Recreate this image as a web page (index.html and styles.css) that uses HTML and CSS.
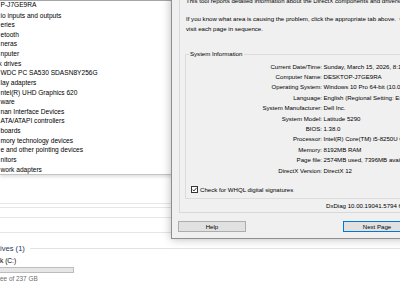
FILE: index.html
```html
<!DOCTYPE html>
<html lang="en">
<head>
  <meta charset="UTF-8" />
  <title>DirectX Diagnostic Tool</title>
<link rel="stylesheet" href="styles.css">
</head>
<body>
<div class="desk">
  <div class="devmgr">
    <ul class="tree">
      <li class="root">P-J7GE9RA</li>
      <li>io inputs and outputs</li>
      <li>eries</li>
      <li>etooth</li>
      <li>neras</li>
      <li>nputer</li>
      <li class="cut">k drives</li>
      <li>WDC PC SA530 SDASN8Y256G</li>
      <li>lay adapters</li>
      <li>ntel(R) UHD Graphics 620</li>
      <li>ware</li>
      <li>nan Interface Devices</li>
      <li>ATA/ATAPI controllers</li>
      <li>boards</li>
      <li>mory technology devices</li>
      <li>e and other pointing devices</li>
      <li>nitors</li>
      <li>work adapters</li>
    </ul>
  </div>

  <div class="explorer">
    <div class="strip s1"></div>
    <div class="strip s2"></div>
    <div class="strip s3"></div>
    <div class="strip s4"></div>
    <div class="group-head">
      <span>ives (1)</span>
      <div class="head-line"></div>
    </div>
    <div class="drive-name">k (C:)</div>
    <div class="drive-bar"></div>
    <div class="drive-free">ee of 237 GB</div>
  </div>
</div>

<div class="dialog">
  <div class="page">
    <p class="intro">This tool reports detailed information about the DirectX components and drivers installed on your system.</p>
    <p class="intro second">If you know what area is causing the problem, click the appropriate tab above.&nbsp; Otherwise, click the "Next Page" button below to<br>visit each page in sequence.</p>

    <div class="group">
      <span class="legend">System Information</span>
      <div class="info">
        <span class="key">Current Date/Time:</span><span>Sunday, March 15, 2026, 8:13:42 PM</span>
        <span class="key">Computer Name:</span><span>DESKTOP-J7GE9RA</span>
        <span class="key">Operating System:</span><span>Windows 10 Pro 64-bit (10.0, Build 19045)</span>
        <span class="key">Language:</span><span>English (Regional Setting: English)</span>
        <span class="key">System Manufacturer:</span><span>Dell Inc.</span>
        <span class="key">System Model:</span><span>Latitude 5290</span>
        <span class="key">BIOS:</span><span>1.38.0</span>
        <span class="key">Processor:</span><span>Intel(R) Core(TM) i5-8250U CPU @ 1.60GHz</span>
        <span class="key">Memory:</span><span>8192MB RAM</span>
        <span class="key">Page file:</span><span>2574MB used, 7396MB available</span>
        <span class="key">DirectX Version:</span><span>DirectX 12</span>
      </div>
      <div class="check">
        <svg class="box" width="7" height="7" viewBox="0 0 7 7">
          <rect x="0.5" y="0.5" width="6" height="6" fill="#fff" stroke="#333" stroke-width="1"/>
          <path d="M1.5 3.6 L2.9 5 L5.6 1.8" fill="none" stroke="#222" stroke-width="0.9"/>
        </svg>
        <span>Check for WHQL digital signatures</span>
      </div>
    </div>

    <div class="ver">DxDiag 10.00.19041.5794 64-bit Unicode&nbsp; Copyright © Microsoft. All rights reserved.</div>
  </div>

  <div class="buttons">
    <div class="btn">Help</div>
    <div class="btn default">Next Page</div>
  </div>
</div>
</body>
</html>
```

FILE: styles.css
```css
body {
  margin: 0;
  width: 400px;
  height: 300px;
  overflow: hidden;
  background-color: #fff;
  font-family: "Liberation Sans", Arial, sans-serif;
  color: #000;
  position: relative;
}

/* device manager window behind */
.devmgr {
  border-top: 1px solid #a6a6a6;
  border-bottom: 1px solid #c4c4c4;
  box-shadow: 0 2px 3px rgba(0, 0, 0, 0.12);
  position: relative;
  z-index: 1;
  background: #fff;
}

.tree {
  list-style: none;
  margin: 0;
  padding: 0 0 0 0.5px;
  font-size: 6.6px;
  line-height: 9.625px;
  white-space: nowrap;
}

.tree .root {
  margin-top: -1px;
  margin-bottom: 0.9px;
}

.tree .cut {
  text-indent: -2px;
}

/* explorer window below */
.strip {
  border-bottom: 1px solid #e6e6e6;
}

.s1 { height: 28px; }
.s2 { height: 3px; }
.s3 { height: 9px; }
.s4 { height: 14px; }

.group-head {
  display: flex;
  align-items: center;
  margin-top: 10px;
  height: 10px;
  font-size: 7.6px;
  color: #1e395b;
}

.head-line {
  flex: 1;
  height: 1px;
  background: #e2e2e2;
  margin-left: 5px;
}

.drive-name {
  margin-top: 3px;
  font-size: 6.6px;
  line-height: 10px;
}

.drive-bar {
  margin-top: 0.5px;
  width: 74px;
  height: 6px;
  box-sizing: border-box;
  background: #e6e6e6;
  border: 1px solid #bcbcbc;
  border-left: none;
}

.drive-free {
  margin-top: 1px;
  font-size: 6.4px;
  line-height: 9px;
  color: #6d6d6d;
}

/* dxdiag window */
.dialog {
  position: absolute;
  left: 171px;
  top: -6px;
  width: 262px;
  background: #f0f0f0;
  border: 1px solid #8f8f8f;
  box-shadow: 0 0 9px rgba(0, 0, 0, 0.28);
  font-size: 6.1px;
  white-space: nowrap;
  padding-bottom: 6px;
  z-index: 2;
}

.page {
  margin-left: 7px;
  border: 1px solid #d9d9d9;
  border-right: none;
  padding: 0 0 1px 6px;
}

.intro {
  margin: 0;
  line-height: 9.4px;
}

.intro.second {
  margin-top: 8.9px;
}

.group {
  margin: 20.9px 0 0 -1px;
  border: 1px solid #dcdcdc;
  border-right: none;
  padding: 0 0 3.8px 5px;
}

.legend {
  display: block;
  width: max-content;
  margin: -5.7px 0 0 -2px;
  padding: 0 1px;
  background: #f0f0f0;
  line-height: 9.4px;
}

.info {
  display: grid;
  grid-template-columns: 131px auto;
  column-gap: 1.5px;
  margin-top: 2.8px;
  line-height: 10.4px;
}

.key {
  text-align: right;
}

.check {
  display: flex;
  align-items: center;
  gap: 2px;
  margin-top: 8.9px;
  line-height: 9.4px;
}

.box {
  display: block;
}

.ver {
  margin: 2.3px 0 0 140px;
  line-height: 9.4px;
}

.buttons {
  display: flex;
  gap: 97px;
  margin-top: 8.3px;
  padding-left: 6px;
}

.btn {
  width: 68px;
  height: 11px;
  box-sizing: border-box;
  border: 1px solid #adadad;
  background: #e1e1e1;
  line-height: 9px;
  text-align: center;
}

.btn.default {
  border-color: #0078d7;
}
```
